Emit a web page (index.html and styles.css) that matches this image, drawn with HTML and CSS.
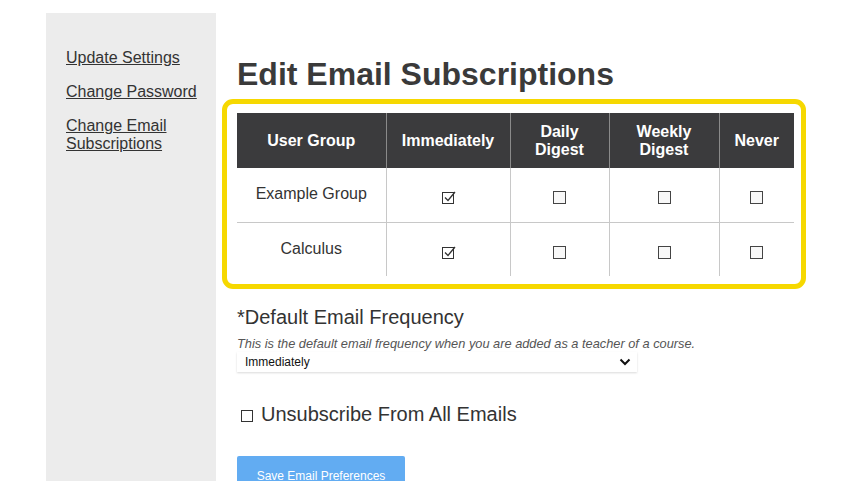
FILE: index.html
```html
<!DOCTYPE html>
<html>
<head>
<meta charset="utf-8">
<link rel="stylesheet" href="styles.css">
</head>
<body>
<div class="page">
  <nav class="sidebar">
    <a href="#">Update Settings</a>
    <a href="#">Change Password</a>
    <a href="#">Change Email Subscriptions</a>
  </nav>
  <main class="main">
    <h1 class="title">Edit Email Subscriptions</h1>
    <div class="highlight">
      <table class="subs">
        <colgroup>
          <col class="c1"><col class="c2"><col class="c3"><col class="c4"><col class="c5">
        </colgroup>
        <thead>
          <tr><th>User Group</th><th>Immediately</th><th>Daily<br>Digest</th><th>Weekly<br>Digest</th><th>Never</th></tr>
        </thead>
        <tbody>
          <tr>
            <td class="name">Example Group</td>
            <td class="box"><span class="cb checked"><svg width="16" height="15" viewBox="0 0 16 15"><rect x="0.5" y="2.5" width="11" height="11" fill="#fff" stroke="#333"/><path d="M3 7.5 L6 10.5 L13 2" fill="none" stroke="#333" stroke-width="1.3"/></svg></span></td>
            <td class="box"><span class="cb"></span></td>
            <td class="box"><span class="cb"></span></td>
            <td class="box"><span class="cb"></span></td>
          </tr>
          <tr>
            <td class="name">Calculus</td>
            <td class="box"><span class="cb checked"><svg width="16" height="15" viewBox="0 0 16 15"><rect x="0.5" y="2.5" width="11" height="11" fill="#fff" stroke="#333"/><path d="M3 7.5 L6 10.5 L13 2" fill="none" stroke="#333" stroke-width="1.3"/></svg></span></td>
            <td class="box"><span class="cb"></span></td>
            <td class="box"><span class="cb"></span></td>
            <td class="box"><span class="cb"></span></td>
          </tr>
        </tbody>
      </table>
    </div>
    <h2 class="freq-title">*Default Email Frequency</h2>
    <p class="hint">This is the default email frequency when you are added as a teacher of a course.</p>
    <div class="select">
      <span>Immediately</span>
      <svg width="12" height="8" viewBox="0 0 12 8"><path d="M1.5 1.5 L6 6 L10.5 1.5" fill="none" stroke="#111" stroke-width="2"/></svg>
    </div>
    <label class="unsub"><span class="cb big"></span><span>Unsubscribe From All Emails</span></label>
    <button class="save">Save Email Preferences</button>
  </main>
</div>
</body>
</html>
```

FILE: styles.css
```css
html, body {
  margin: 0;
  padding: 0;
  background: #fff;
  font-family: "Liberation Sans", Arial, sans-serif;
  color: #333;
  height: 481px;
  overflow: hidden;
}
.page {
  display: flex;
  padding: 13px 0 0 46px;
  height: 468px;
}
.sidebar {
  width: 170px;
  flex: none;
  background: #ececec;
  padding: 36px 0 0 20px;
  box-sizing: border-box;
  display: flex;
  flex-direction: column;
  gap: 16px;
}
.sidebar a {
  color: #333;
  font-size: 16px;
  line-height: 18px;
  text-decoration: underline;
  width: 140px;
}
.main {
  padding: 43px 0 0 21px;
  display: flex;
  flex-direction: column;
  align-items: flex-start;
}
.main > * { flex-shrink: 0; }
.title {
  margin: 0 0 7px 0;
  font-size: 32px;
  line-height: 36px;
  font-weight: bold;
  color: #3a3a3a;
}
.highlight {
  margin-left: -15px;
  border: 5px solid #f6d800;
  border-radius: 11px;
  padding: 9px 7px 8px 10px;
  width: 557px;
}
.subs {
  border-collapse: collapse;
  table-layout: fixed;
  width: 557px;
}
.c1 { width: 149px; }
.c2 { width: 124px; }
.c3 { width: 99px; }
.c4 { width: 110px; }
.c5 { width: 75px; }
.subs thead tr { height: 55px; }
.subs th {
  background: #3b3b3d;
  color: #fff;
  font-size: 16px;
  line-height: 18px;
  font-weight: bold;
  padding: 0;
  border-left: 1px solid #8a8a8a;
}
.subs th:first-child { border-left: none; }
.subs tbody tr { height: 54px; }
.subs td {
  padding: 0;
  text-align: center;
  border-left: 1px solid #c8c8c8;
  border-top: 1px solid #c8c8c8;
  font-size: 16px;
  line-height: 18px;
}
.subs tbody tr:first-child td { border-top: none; }
.subs td:first-child { border-left: none; }
.subs td.name { padding-bottom: 1px; }
.subs td.box { padding-top: 4px; }
.cb {
  display: inline-block;
  width: 11px;
  height: 11px;
  border: 1px solid #444;
  background: #f8f8f8;
  vertical-align: middle;
}
.cb.checked {
  border: none;
  background: none;
  width: 16px;
  height: 15px;
  margin-left: 4px;
  vertical-align: middle;
}
.cb.checked svg { display: block; }
.freq-title {
  margin: 16px 0 0 0;
  font-size: 20px;
  line-height: 24px;
  font-weight: normal;
  color: #333;
}
.hint {
  margin: 7px 0 0 0;
  font-size: 12.8px;
  line-height: 15px;
  font-style: italic;
  color: #555;
}
.select {
  margin-top: 1px;
  width: 400px;
  height: 20px;
  box-sizing: border-box;
  background: #fff;
  box-shadow: 0 1px 2px rgba(0,0,0,0.15);
  display: flex;
  align-items: center;
  justify-content: space-between;
  padding: 0 6px 0 8px;
  font-size: 12px;
  color: #111;
}
.unsub {
  margin-top: 30px;
  display: flex;
  align-items: center;
  gap: 8px;
  font-size: 20px;
  line-height: 24px;
  color: #333;
  padding-left: 4px;
}
.cb.big {
  width: 10px;
  height: 10px;
  border: 1px solid #333;
  background: #fff;
  margin-top: 3px;
}
.save {
  margin-top: 30px;
  width: 168px;
  height: 40px;
  border: none;
  border-radius: 2px;
  background: #62acf2;
  color: #fff;
  font-family: "Liberation Sans", Arial, sans-serif;
  font-size: 12px;
  padding: 0;
  text-align: center;
}
```
